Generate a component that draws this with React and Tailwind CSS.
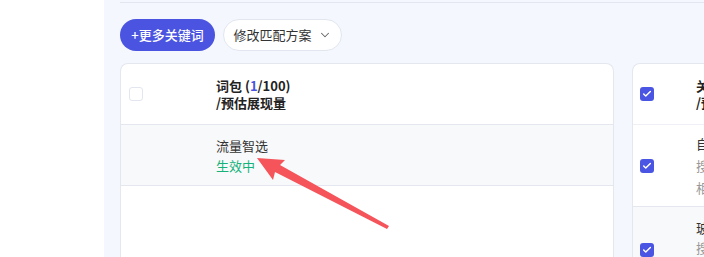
import { ChevronDown, Check } from 'lucide-react';

const font = { fontFamily: '"Noto Sans CJK SC", "Noto Sans", sans-serif' };

const Box = ({ checked }) =>
  checked ? (
    <span className="flex h-[14px] w-[14px] items-center justify-center rounded-[3px] bg-[#4b55e3]">
      <Check className="h-[10px] w-[10px] text-white" strokeWidth={3.5} />
    </span>
  ) : (
    <span className="block h-[14px] w-[14px] rounded-[3px] border border-[#e3e6ee] bg-white" />
  );

export default function App() {
  return (
    <div className="relative flex h-[257px] w-[704px] overflow-hidden bg-white" style={font}>
      <div className="w-[104px] shrink-0 bg-white" />
      <div className="flex-1 bg-[#f4f7fe] pl-4">
        <div className="h-[3px] border-b border-[#e2e6f0]" />

        {/* actions */}
        <div className="mt-4 flex gap-2">
          <button className="flex h-8 w-[95px] items-center justify-center rounded-full bg-[#4a54e1] text-[13px] font-medium text-white">
            +更多关键词
          </button>
          <button className="flex h-8 w-[119px] items-center justify-center gap-1.5 rounded-full border border-[#e2e6ef] bg-white text-[13px] text-[#333]">
            修改匹配方案
            <ChevronDown className="h-[14px] w-[14px] text-[#666]" strokeWidth={1.8} />
          </button>
        </div>

        {/* tables */}
        <div className="mt-3 flex gap-[18px]">
          <div className="h-[220px] w-[494px] shrink-0 overflow-hidden rounded-t-lg border border-b-0 border-[#e4e7ef] bg-white">
            <div className="flex h-[60px] items-center">
              <div className="w-[95px] pl-2">
                <Box />
              </div>
              <div className="text-[13px] font-bold leading-[17px] text-[#222]">
                <div>
                  词包 (<span className="text-[#4a54e1]">1</span>/100)
                </div>
                <div>/预估展现量</div>
              </div>
            </div>
            <div className="flex h-[62px] items-center border-y border-[#e4e7ef] bg-[#f8f9fb] pt-0.5">
              <div className="w-[95px]" />
              <div className="text-[13px] leading-5">
                <div className="text-[#333]">流量智选</div>
                <div className="text-[#16b27a]">生效中</div>
              </div>
            </div>
          </div>

          <div className="h-[220px] w-[300px] shrink-0 overflow-hidden rounded-t-lg border border-b-0 border-[#e4e7ef] bg-white">
            <div className="flex h-[60px] items-center">
              <div className="w-[63px] pl-[7px]">
                <Box checked />
              </div>
              <div className="whitespace-nowrap text-[13px] font-bold leading-[17px] text-[#222]">
                <div>关键词 (12/500)</div>
                <div>/预估展现量</div>
              </div>
            </div>
            <div className="flex h-[82px] items-center border-t border-[#eef0f5]">
              <div className="w-[63px] pl-[7px]">
                <Box checked />
              </div>
              <div className="whitespace-nowrap text-[13px] leading-[22px]">
                <div className="text-[#333]">自动拓展关键词</div>
                <div className="text-[#999]">搜索热度 1200</div>
                <div className="text-[#999]">相关度 高</div>
              </div>
            </div>
            <div className="flex h-[80px] items-start border-t border-[#e4e7ef] bg-[#f8f9fb] pt-[11px]">
              <div className="w-[63px] pl-[7px] pt-[25px]">
                <Box checked />
              </div>
              <div className="whitespace-nowrap text-[13px] leading-[20px]">
                <div className="text-[#333]">玻璃杯</div>
                <div className="text-[#999]">搜索热度 860</div>
              </div>
            </div>
          </div>
        </div>
      </div>

      {/* annotation arrow */}
      <svg className="pointer-events-none absolute left-0 top-0" width="704" height="257">
        <polygon
          points="257,158 285,160 280,165 389,226 387,229 275,172 273,180"
          fill="#f4545a"
        />
      </svg>
    </div>
  );
}
